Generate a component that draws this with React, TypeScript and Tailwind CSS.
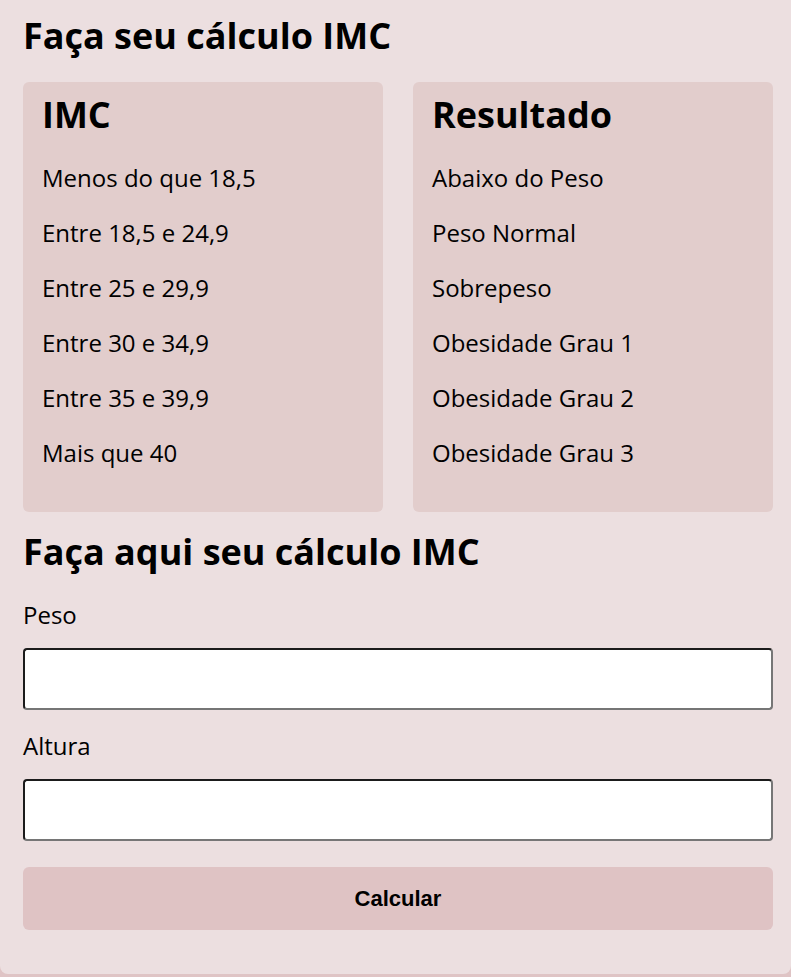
import React from "react";

const imc = ["Menos do que 18,5", "Entre 18,5 e 24,9", "Entre 25 e 29,9", "Entre 30 e 34,9", "Entre 35 e 39,9", "Mais que 40"];
const res = ["Abaixo do Peso", "Peso Normal", "Sobrepeso", "Obesidade Grau 1", "Obesidade Grau 2", "Obesidade Grau 3"];

function Box({ title, items }: { title: string; items: string[] }) {
  return (
    <div className="bg-[#e2cdcc] rounded-md px-[19px] pt-[8px] pb-[43px]">
      <h2 className="text-[36px] font-bold leading-[49px] mb-[22px]">{title}</h2>
      <div className="flex flex-col gap-[22px]">
        {items.map((t) => (
          <p key={t} className="text-[24px] leading-[33px]">{t}</p>
        ))}
      </div>
    </div>
  );
}

const inputCls =
  "block w-full h-[62px] bg-white rounded-[4px] border-2 border-t-[#1b1b1b] border-l-[#1b1b1b] border-b-[#767676] border-r-[#767676]";

export default function App() {
  return (
    <div className="min-h-screen bg-[#dfc4c5] text-black" style={{ fontFamily: '"Open Sans", sans-serif' }}>
      <div className="bg-[#ecdfe0] rounded-b-lg pl-[23px] pr-[18px] pt-[11px] pb-[44px]">
        <h1 className="text-[36px] font-bold leading-[49px]">Faça seu cálculo IMC</h1>
        <div className="grid grid-cols-2 gap-[30px] mt-[22px]">
          <Box title="IMC" items={imc} />
          <Box title="Resultado" items={res} />
        </div>
        <h2 className="text-[36px] font-bold leading-[49px] mt-[15px]">Faça aqui seu cálculo IMC</h2>
        <label className="block text-[24px] leading-[33px] mt-[22px]">Peso</label>
        <input className={inputCls + " mt-[17px]"} />
        <label className="block text-[24px] leading-[33px] mt-[19px]">Altura</label>
        <input className={inputCls + " mt-[17px]"} />
        <button
          className="block w-full h-[63px] mt-[26px] bg-[#dfc3c4] rounded-md text-[22px] font-bold"
          style={{ fontFamily: '"Liberation Sans", Arial, sans-serif' }}
        >
          Calcular
        </button>
      </div>
    </div>
  );
}
